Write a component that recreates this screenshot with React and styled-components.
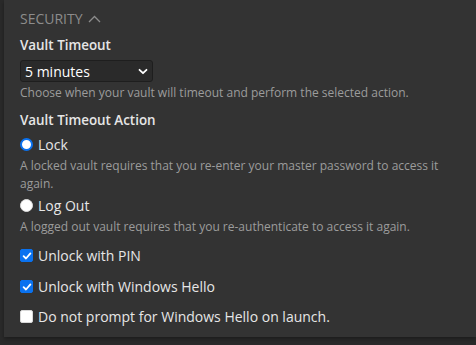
import React from "react";
import styled, { createGlobalStyle } from "styled-components";

const Global = createGlobalStyle`
  html, body { margin: 0; padding: 0; background: #2a2a2a; }
  body { font-family: "Open Sans", "Noto Sans", sans-serif; }
  * { box-sizing: border-box; }
`;

const Page = styled.div`
  width: 476px;
  height: 345px;
  padding-left: 4px;
  background: #2a2a2a;
`;

const Panel = styled.section`
  height: 337px;
  background: #333333;
  padding: 9px 16px 0 16px;
  box-shadow: 0 2px 4px rgba(0, 0, 0, 0.35);
`;

const Header = styled.div`
  display: flex;
  align-items: center;
  gap: 5px;
  color: #8c8c8c;
  font-size: 14px;
  line-height: 20px;
  text-transform: uppercase;
  margin-bottom: 7px;
`;

const Field = styled.div`
  display: flex;
  flex-direction: column;
  margin-bottom: ${(p) => p.$mb || 0}px;
`;

const Label = styled.div`
  color: #e6e6e6;
  font-size: 13.4px;
  font-weight: 600;
  line-height: 19px;
  margin-bottom: ${(p) => p.$mb || 0}px;
`;

const SelectBox = styled.div`
  width: 133px;
  height: 22px;
  display: flex;
  align-items: center;
  justify-content: space-between;
  padding: 0 4px 0 4px;
  background: #2a2a2a;
  border: 1px solid #1e1e1e;
  border-radius: 3px;
  color: #ffffff;
  font-size: 14px;
  margin-top: 5px;
`;

const Help = styled.div`
  color: #9c9c9c;
  font-size: 12px;
  line-height: 18px;
  margin-top: ${(p) => p.$mt || 0}px;
  padding-right: 10px;
`;

const Option = styled.label`
  display: flex;
  align-items: center;
  gap: 5px;
  color: #e6e6e6;
  font-size: 14px;
  line-height: 19px;
  margin-top: ${(p) => p.$mt || 0}px;
`;

const Radio = styled.span`
  width: 13px;
  height: 13px;
  border-radius: 50%;
  background: #ffffff;
  border: ${(p) => (p.$checked ? "2.5px solid #0a72f0" : "1px solid #e0e0e0")};
  flex: none;
`;

const Check = styled.span`
  width: 13px;
  height: 13px;
  border-radius: 2px;
  flex: none;
  display: flex;
  align-items: center;
  justify-content: center;
  background: ${(p) => (p.$checked ? "#0a72f0" : "#ffffff")};
  border: 1px solid ${(p) => (p.$checked ? "#0a72f0" : "#d8d8d8")};
`;

const CheckRow = styled(Option)`
  margin-top: ${(p) => p.$mt || 0}px;
`;

function Tick() {
  return (
    <svg width="10" height="10" viewBox="0 0 10 10">
      <path d="M1.6 5.2 L4 7.5 L8.4 2.4" fill="none" stroke="#fff" strokeWidth="1.8" strokeLinecap="round" strokeLinejoin="round" />
    </svg>
  );
}

function ChevronUp() {
  return (
    <svg width="13" height="8" viewBox="0 0 13 8">
      <path d="M1 7 L6.5 1.5 L12 7" fill="none" stroke="#8c8c8c" strokeWidth="1.3" />
    </svg>
  );
}

function ChevronDown() {
  return (
    <svg width="10" height="7" viewBox="0 0 10 7">
      <path d="M1.5 1.8 L5 5.2 L8.5 1.8" fill="none" stroke="#fff" strokeWidth="1.8" strokeLinecap="round" strokeLinejoin="round" />
    </svg>
  );
}

export default function App() {
  return (
    <>
      <Global />
      <Page>
        <Panel>
          <Header>
            <span>Security</span>
            <ChevronUp />
          </Header>
          <Field $mb={9}>
            <Label>Vault Timeout</Label>
            <SelectBox>
              <span>5 minutes</span>
              <ChevronDown />
            </SelectBox>
            <Help $mt={2}>Choose when your vault will timeout and perform the selected action.</Help>
          </Field>
          <Field>
            <Label $mb={5}>Vault Timeout Action</Label>
            <Option>
              <Radio $checked />
              <span>Lock</span>
            </Option>
            <Help $mt={3}>A locked vault requires that you re-enter your master password to access it again.</Help>
            <Option $mt={3}>
              <Radio />
              <span>Log Out</span>
            </Option>
            <Help $mt={3}>A logged out vault requires that you re-authenticate to access it again.</Help>
          </Field>
          <CheckRow $mt={10}>
            <Check $checked><Tick /></Check>
            <span>Unlock with PIN</span>
          </CheckRow>
          <CheckRow $mt={12}>
            <Check $checked><Tick /></Check>
            <span>Unlock with Windows Hello</span>
          </CheckRow>
          <CheckRow $mt={11}>
            <Check />
            <span>Do not prompt for Windows Hello on launch.</span>
          </CheckRow>
        </Panel>
      </Page>
    </>
  );
}
